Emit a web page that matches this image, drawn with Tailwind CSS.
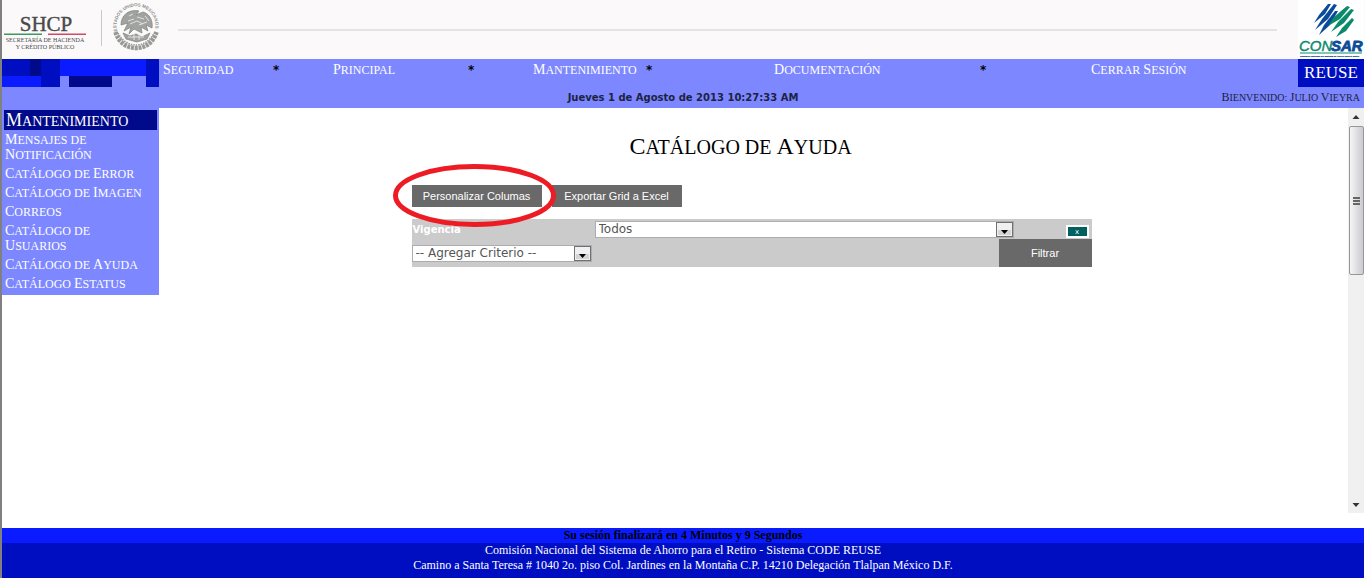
<!DOCTYPE html>
<html lang="es">
<head>
<meta charset="utf-8">
<title>Catálogo de Ayuda</title>
<script src="https://cdn.jsdelivr.net/npm/@tailwindcss/browser@4"></script>
</head>
<body class="min-h-screen flex flex-col bg-white border-l-2 border-[#808080] font-['Liberation_Serif',serif]">
<header>
  <div class="h-[59px] bg-[#fbf9fa] flex items-start">
    <svg class="w-[160px] h-[59px] shrink-0" viewBox="2 0 160 59" role="img" aria-label="SHCP Secretaría de Hacienda y Crédito Público">
      <g fill="#4a4a4a" text-anchor="middle" font-family="Liberation Serif, serif">
        <text x="46" y="31" font-size="21" stroke="#4a4a4a" stroke-width=".4">SHCP</text>
        <text x="45" y="42" font-size="6">SECRETARÍA DE HACIENDA</text>
        <text x="45" y="49" font-size="6">Y CRÉDITO PÚBLICO</text>
      </g>
      <path d="M4 34.200H42" stroke="#3c9a5c" stroke-width="1.400"/><path d="M48 34.200H86" stroke="#d04a66" stroke-width="1.400"/>
      <path d="M101.500 10V46" stroke="#c9c9c9"/>
      <path id="arc" d="M117.500 32A19.500 19.500 0 1 1 154.500 32" fill="none"/>
      <text font-family="Liberation Sans, sans-serif" font-size="4.500" font-weight="bold" fill="#8b8e8b"><textPath href="#arc" startOffset="1">ESTADOS UNIDOS MEXICANOS</textPath></text>
      <g fill="none" stroke="#979997">
        <path d="M115.500 32C119 43 127 48 136 48S153 43 156.500 32" stroke-width="4.500" stroke-dasharray="3 .8"/>
        <path d="M118 33C122 41 129 45 136 45S150 41 154 33" stroke-width="1.500" stroke-dasharray="1.500 1"/>
      </g>
      <g fill="#a0a3a0" stroke="#858885" stroke-width=".8">
        <path d="M121 25C121 15 129 9 139 11L136 15L143 12C150 14 153 21 152 28L146 25L148 31L141 27L142 33L134 29L129 34L131 27L124 31L128 23Z"/>
        <path d="M123 33L130 36L136 34L142 37L150 33L147 39L137 42L126 39Z"/>
      </g>
      <path d="M128 21L134 19M130 24L137 21L143 24M137 17L144 19M139 25L147 22M129 16L133 14M145 16L149 21M128 37H144M134 34V40M139 34V40" stroke="#e9e9e9" stroke-width=".9" fill="none"/>
    </svg>
    <div class="flex-1 h-0.5 bg-[#e3e5e4] mt-[29px] ml-4 mr-[21px]"></div>
    <svg class="w-[67px] h-[59px] shrink-0" viewBox="1298 0 67 59" role="img" aria-label="CONSAR">
      <rect x="1298" width="66" height="59" fill="#fff"/>
      <g fill="#0a4a9a">
        <path d="M1314 23L1319 15L1328 4L1331 4L1325 14Z"/>
        <path d="M1315 30L1322 19L1334 4L1337 5L1328 19Z"/>
        <path d="M1319 35L1324 25L1335 11L1338 11L1330 25Z"/>
      </g>
      <g fill="#0a8a6a">
        <path d="M1328 26L1334 17L1347 6L1350 7L1340 19Z"/>
        <path d="M1331 32L1338 22L1351 9L1354 10L1344 23Z"/>
        <path d="M1336 37L1342 28L1352 18L1354 20L1346 31Z"/>
      </g>
      <text x="1299" y="51" font-family="Liberation Sans, sans-serif" font-style="italic" font-size="15" fill="#0a8a6a" stroke="#0a8a6a" stroke-width=".4">CON</text>
      <text x="1331" y="51" font-family="Liberation Sans, sans-serif" font-style="italic" font-weight="bold" font-size="15" fill="#0a4a9a" stroke="#0a4a9a" stroke-width=".8">SAR</text>
      <path d="M1300 53H1362" stroke="#0a8a6a"/>
      <text x="1300" y="57" font-family="Liberation Sans, sans-serif" font-size="2.400" fill="#0a4a9a" stroke="#0a4a9a" stroke-width=".2">Comisión Nacional del Sistema de Ahorro para el Retiro</text>
    </svg>
  </div>
  <div class="bg-[#7d87ff] h-[49px] mr-px">
    <div class="flex h-7">
      <svg class="w-[157px] h-7 shrink-0" viewBox="2 59 157 28" shape-rendering="crispEdges" aria-hidden="true">
        <path fill="#000ec2" d="M2 59H60V87H41V76H2ZM146 59H159V87H146Z"/>
        <path fill="#000a8a" d="M30 59H41V76H30ZM69 76H112V87H69Z"/>
        <path fill="#0a1cff" d="M60 59H146V76H60ZM2 76H41V87H2Z"/>
      </svg>
      <nav class="flex-1 h-[22px] pl-1 grid grid-cols-[110fr_60fr_135fr_65fr_113fr_128fr_206fr_111fr_207fr] items-center text-xs leading-5 text-white uppercase whitespace-nowrap">
        <a href="#" class="block first-letter:text-[14px]">Seguridad</a><span class="text-black font-bold font-['DejaVu_Sans',sans-serif]">*</span>
        <a href="#" class="block first-letter:text-[14px]">Principal</a><span class="text-black font-bold font-['DejaVu_Sans',sans-serif]">*</span>
        <a href="#" class="block first-letter:text-[14px]">Mantenimiento</a><span class="text-black font-bold font-['DejaVu_Sans',sans-serif]">*</span>
        <a href="#" class="block first-letter:text-[14px]">Documentación</a><span class="text-black font-bold font-['DejaVu_Sans',sans-serif]">*</span>
        <a href="#"><span class="inline-block first-letter:text-[14px]">Cerrar</span> <span class="inline-block first-letter:text-[14px]">Sesión</span></a>
      </nav>
      <div class="w-[66px] bg-[#000ec2] text-white text-[17px] leading-7 text-center">REUSE</div>
    </div>
    <div class="grid grid-cols-[1fr_auto_1fr] items-center h-[21px] text-[#1c2340]">
      <span></span>
      <span class="font-['DejaVu_Sans',sans-serif] font-bold text-[10px]">Jueves 1 de Agosto de 2013 10:27:33 AM</span>
      <span class="text-right pr-1 text-[10px] leading-5 uppercase"><span class="inline-block first-letter:text-[12px]">Bienvenido:</span> <span class="inline-block first-letter:text-[12px]">Julio</span> <span class="inline-block first-letter:text-[12px]">Vieyra</span></span>
    </div>
  </div>
</header>
<div class="flex-1 flex items-stretch">
  <aside class="w-[157px] shrink-0 text-white uppercase">
    <div class="bg-[#7d87ff] pt-0.5 px-0.5 pb-[3px]">
      <h2 class="bg-[#000a8a] h-5 leading-5 pl-0.5 text-[14px] first-letter:text-[18px]">Mantenimiento</h2>
      <nav class="flex flex-col gap-1 pt-[3px] pl-px text-xs leading-[15px]">
        <a href="#"><span class="inline-block first-letter:text-[14px] first-letter:leading-[0px]">Mensajes</span> de<br><span class="inline-block first-letter:text-[14px] first-letter:leading-[0px]">Notificación</span></a>
        <a href="#"><span class="inline-block first-letter:text-[14px] first-letter:leading-[0px]">Catálogo</span> de <span class="inline-block first-letter:text-[14px] first-letter:leading-[0px]">Error</span></a>
        <a href="#"><span class="inline-block first-letter:text-[14px] first-letter:leading-[0px]">Catálogo</span> de <span class="inline-block first-letter:text-[14px] first-letter:leading-[0px]">Imagen</span></a>
        <a href="#"><span class="inline-block first-letter:text-[14px] first-letter:leading-[0px]">Correos</span></a>
        <a href="#"><span class="inline-block first-letter:text-[14px] first-letter:leading-[0px]">Catálogo</span> de<br><span class="inline-block first-letter:text-[14px] first-letter:leading-[0px]">Usuarios</span></a>
        <a href="#"><span class="inline-block first-letter:text-[14px] first-letter:leading-[0px]">Catálogo</span> de <span class="inline-block first-letter:text-[14px] first-letter:leading-[0px]">Ayuda</span></a>
        <a href="#"><span class="inline-block first-letter:text-[14px] first-letter:leading-[0px]">Catálogo</span> <span class="inline-block first-letter:text-[14px] first-letter:leading-[0px]">Estatus</span></a>
      </nav>
    </div>
  </aside>
  <main class="flex-1 pr-1 font-['Liberation_Sans',sans-serif]">
    <h1 class="pt-6 pr-[22px] text-center text-[20px] leading-[30px] font-['Liberation_Serif',serif] uppercase"><span class="inline-block first-letter:text-[24px] first-letter:leading-[0px]">Catálogo</span> de <span class="inline-block first-letter:text-[24px] first-letter:leading-[0px]">Ayuda</span></h1>
    <div class="w-[680px] mx-auto pt-[23px]">
      <div class="flex gap-[10px] text-[11px] text-white">
        <div class="relative">
          <button class="w-[130px] h-[22px] bg-[#696969]">Personalizar Columas</button>
          <svg class="absolute -left-5 -top-6 w-[166px] h-[68px] z-10 pointer-events-none" viewBox="0 0 166 68" aria-hidden="true"><ellipse cx="82.500" cy="34.500" rx="79" ry="29" fill="none" stroke="#ed1c24" stroke-width="5"/></svg>
        </div>
        <button class="w-[130px] h-[22px] bg-[#696969]">Exportar Grid a Excel</button>
      </div>
      <form class="mt-3 bg-[#cbcbcb] h-12 font-['DejaVu_Sans',sans-serif]">
        <div class="flex h-5 items-start">
          <label for="vig" class="w-[183px] pl-px pt-0.5 text-[10px] leading-[17px] font-bold text-white">Vigencia</label>
          <div class="relative w-[419px] mt-0.5">
            <select id="vig" class="block appearance-none w-full h-[17px] bg-white border border-[#abadb3] pl-[3px] text-xs leading-[15px] text-[#555]"><option>Todos</option></select>
            <svg class="absolute right-0 top-0 w-[18px] h-[17px] pointer-events-none" viewBox="0 0 18 17" aria-hidden="true"><rect x=".5" y="1.500" width="16" height="14" fill="#f0f0f0" stroke="#707070"/><path d="M2 9H15V14H2Z" fill="#d4d4d4"/><path d="M5 9H12L8.500 13Z" fill="#000"/></svg>
          </div>
          <button type="button" class="ml-auto mr-[3px] mt-[6px] w-[23px] h-[13px] bg-[#005f5f] border-2 border-white text-white text-[7px] leading-[8px]">x</button>
        </div>
        <div class="flex h-7 justify-between items-start">
          <div class="relative w-[180px] mt-1.5">
            <select aria-label="Agregar Criterio" class="block appearance-none w-full h-[17px] bg-white border border-[#abadb3] pl-[3px] text-xs leading-[15px] text-[#555]"><option>-- Agregar Criterio --</option></select>
            <svg class="absolute right-0 top-0 w-[18px] h-[17px] pointer-events-none" viewBox="0 0 18 17" aria-hidden="true"><rect x=".5" y="1.500" width="16" height="14" fill="#f0f0f0" stroke="#707070"/><path d="M2 9H15V14H2Z" fill="#d4d4d4"/><path d="M5 9H12L8.500 13Z" fill="#000"/></svg>
          </div>
          <button type="button" class="w-[93px] h-7 bg-[#696969] text-white text-[11px] font-['Liberation_Sans',sans-serif]">Filtrar</button>
        </div>
      </form>
    </div>
  </main>
  <div class="w-4 mr-px mb-[15px] bg-[#f0f0f0] flex flex-col items-center" aria-hidden="true">
    <svg class="w-4 h-[18px]" viewBox="0 0 16 18"><path d="M4.500 11L8 7L11.500 11Z" fill="#333"/></svg>
    <div class="w-[15px] h-[149px] rounded-xs border border-[#979797] bg-linear-to-r from-[#f5f5f5] to-[#cbcbd0] flex flex-col items-center justify-center gap-px">
      <i class="w-[7px] h-0.5 bg-[#666]"></i><i class="w-[7px] h-0.5 bg-[#666]"></i><i class="w-[7px] h-0.5 bg-[#666]"></i>
    </div>
    <svg class="w-4 h-[18px] mt-auto" viewBox="0 0 16 18"><path d="M4.500 8L8 12L11.500 8Z" fill="#333"/></svg>
  </div>
</div>
<footer class="mr-px text-center text-xs leading-[15px] text-white bg-[#000ec2] pb-[5px]">
  <p class="bg-[#0a1cff] text-black font-bold">Su sesión finalizará en 4 Minutos y 9 Segundos</p>
  <p>Comisión Nacional del Sistema de Ahorro para el Retiro - Sistema CODE REUSE</p>
  <p>Camino a Santa Teresa # 1040 2o. piso Col. Jardines en la Montaña C.P. 14210 Delegación Tlalpan México D.F.</p>
</footer>
</body>
</html>
